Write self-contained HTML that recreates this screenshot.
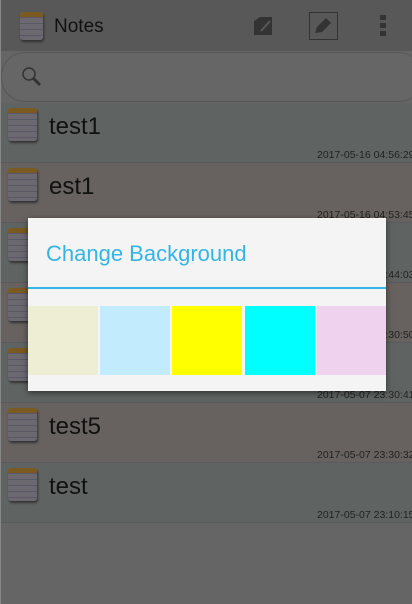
<!DOCTYPE html>
<html><head><style>
body{margin:0;width:412px;height:604px;overflow:hidden;background:#656565;font-family:"Liberation Sans",sans-serif;position:relative}
.hdr{position:absolute;left:0;top:0;width:412px;height:51px;background:#585858}
.hdr .t{position:absolute;left:54px;top:16px;font-size:19px;color:#111}
.srch{position:absolute;left:1px;top:52px;width:420px;height:48px;border:1px solid #575757;border-radius:24px;background:#666}
.row{position:absolute;left:1px;width:411px;height:59px;border-bottom:1px solid #5a5a5a}
.b{background:#5f6462}.r{background:#67625f}
.row .n{position:absolute;left:48px;top:10px;font-size:24px;color:#111}
.row .d{position:absolute;left:316px;top:46px;font-size:10.5px;color:#222;white-space:nowrap}
.ic{position:absolute;left:7px;top:5px;width:29px;height:33px;border-radius:3px;background:repeating-linear-gradient(#6b6870 0 5px,#5a5866 5px 6px);box-shadow:1px 2px 2px #333}
.ic:before{content:"";position:absolute;left:0;top:0;width:100%;height:5px;background:#7a5a20;border-radius:3px 3px 0 0}
.dlg{position:absolute;left:28px;top:218px;width:358px;height:173px;background:#f4f4f4;box-shadow:0 2px 6px rgba(0,0,0,.5)}
.dlg .t{position:absolute;left:18px;top:23px;font-size:22px;color:#33b5e5}
.dlg .l{position:absolute;left:0;top:69px;width:358px;height:2px;background:#33b5e5}
.sw{position:absolute;top:88px;height:69px}
</style></head><body>
<div class="hdr">
<div class="ic" style="left:20px;top:12px;width:23px;height:28px"></div>
<div class="t">Notes</div>
<svg style="position:absolute;left:252px;top:15px" width="22" height="22"><path d="M2 6 L8 2 H20 V20 H2Z" fill="#333"/><path d="M9 16 L18 6" stroke="#585858" stroke-width="2"/></svg>
<div style="position:absolute;left:309px;top:12px;width:27px;height:26px;border:1px solid #333"></div>
<svg style="position:absolute;left:311px;top:14px" width="24" height="24"><path d="M4 19 L6 13 L15 4 L20 9 L11 18Z" fill="#333"/></svg>
<div style="position:absolute;left:380px;top:15px;width:6px;height:22px;background:repeating-linear-gradient(#333 0 5px,transparent 5px 8px)"></div>
</div>
<div class="srch"><svg style="position:absolute;left:18px;top:12px" width="24" height="24"><circle cx="9" cy="9" r="6" fill="none" stroke="#333" stroke-width="1.5"/><path d="M13 13 L20 20" stroke="#333" stroke-width="3"/></svg></div>
<div class="row b" style="top:103px"><div class="ic"></div><div class="n">test1</div><div class="d">2017-05-16 04:56:29</div></div>
<div class="row r" style="top:163px"><div class="ic"></div><div class="n">est1</div><div class="d">2017-05-16 04:53:45</div></div>
<div class="row b" style="top:223px"><div class="ic"></div><div class="d">2017-05-16 04:44:03</div></div>
<div class="row r" style="top:283px"><div class="ic"></div><div class="d">2017-05-07 23:30:50</div></div>
<div class="row b" style="top:343px"><div class="ic"></div><div class="d">2017-05-07 23:30:41</div></div>
<div class="row r" style="top:403px"><div class="ic"></div><div class="n">test5</div><div class="d">2017-05-07 23:30:32</div></div>
<div class="row b" style="top:463px"><div class="ic"></div><div class="n">test</div><div class="d">2017-05-07 23:10:15</div></div>
<div style="position:absolute;left:0;top:0;width:1px;height:604px;background:#888"></div>
<div class="dlg">
<div class="t">Change Background</div><div class="l"></div>
<div class="sw" style="left:0;width:70px;background:#eeeed4"></div>
<div class="sw" style="left:72px;width:70px;background:#c2ecfd"></div>
<div class="sw" style="left:144px;width:70px;background:#ffff00"></div>
<div class="sw" style="left:217px;width:70px;background:#00ffff"></div>
<div class="sw" style="left:289px;width:69px;background:#efd3ee"></div>
</div>
</body></html>
